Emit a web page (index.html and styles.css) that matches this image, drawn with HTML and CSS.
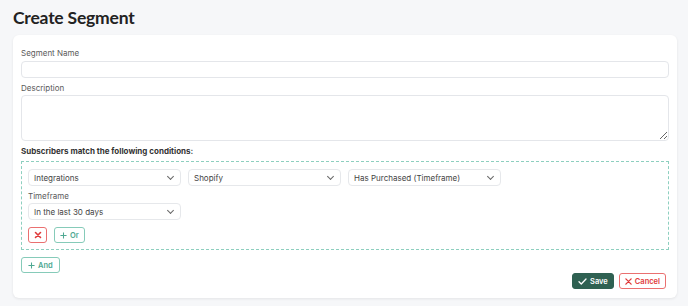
FILE: index.html
```html
<!DOCTYPE html>
<html>
<head>
  <meta charset="UTF-8">
  <link rel="stylesheet" href="styles.css">
</head>
<body>
  <h1 class="page-title">Create Segment</h1>

  <div class="segment-card">
    <div class="field">
      <label class="field-label">Segment Name</label>
      <input class="text-input" type="text">
    </div>
    <div class="field">
      <label class="field-label">Description</label>
      <textarea class="text-area"></textarea>
    </div>

    <div class="conditions-title">Subscribers match the following conditions:</div>

    <div class="condition-group">
      <div class="select-row">
        <div class="select-box">Integrations<span class="chevron"></span></div>
        <div class="select-box">Shopify<span class="chevron"></span></div>
        <div class="select-box">Has Purchased (Timeframe)<span class="chevron"></span></div>
      </div>
      <div class="sub-field">
        <label class="field-label">Timeframe</label>
        <div class="select-box">In the last 30 days<span class="chevron"></span></div>
      </div>
      <div class="group-actions">
        <button class="icon-button remove-button">
          <svg width="8" height="8" viewBox="0 0 8 8"><path d="M1.5 1.5L6.5 6.5M6.5 1.5L1.5 6.5" stroke="#e03a3a" stroke-width="1.6" stroke-linecap="round"/></svg>
        </button>
        <button class="outline-button">
          <svg width="7" height="7" viewBox="0 0 8 8"><path d="M4 0.5V7.5M0.5 4H7.5" stroke="#4ea892" stroke-width="1.2"/></svg>
          Or
        </button>
      </div>
    </div>

    <button class="outline-button and-button">
      <svg width="7" height="7" viewBox="0 0 8 8"><path d="M4 0.5V7.5M0.5 4H7.5" stroke="#4ea892" stroke-width="1.2"/></svg>
      And
    </button>

    <div class="form-actions">
      <button class="save-button">
        <svg width="9" height="7" viewBox="0 0 10 8"><path d="M1 4.2L3.6 6.8L9 1.2" fill="none" stroke="white" stroke-width="1.5" stroke-linecap="round" stroke-linejoin="round"/></svg>
        Save
      </button>
      <button class="cancel-button">
        <svg width="7" height="7" viewBox="0 0 8 8"><path d="M1 1L7 7M7 1L1 7" stroke="#e03a3a" stroke-width="1.5" stroke-linecap="round"/></svg>
        Cancel
      </button>
    </div>
  </div>
</body>
</html>
```

FILE: styles.css
```css
body {
  font-family: Inter, "Open Sans", sans-serif;
  margin: 0;
  padding: 7px 11px 8px 13px;
  background-color: #f6f7f9;
  color: #333;
}
.page-title {
  margin: 0;
  font-family: Lato, Inter, sans-serif;
  font-size: 17.5px;
  font-weight: 700;
  line-height: 22px;
  color: #222;
  letter-spacing: -0.2px;
}
.segment-card {
  margin-top: 6px;
  padding: 12px 8px 9px 8px;
  background-color: white;
  border-radius: 6px;
  box-shadow: 0 1px 3px rgba(0, 0, 0, 0.08);
}
.field {
  display: flex;
  flex-direction: column;
  margin-bottom: 4px;
}
.field-label {
  font-size: 8px;
  line-height: 12px;
  color: #5a5a5a;
  margin-bottom: 2px;
}
.text-input {
  height: 17px;
  box-sizing: border-box;
  border: 1px solid #e4e6ea;
  border-radius: 4px;
  padding: 0 6px;
}
.text-area {
  height: 46px;
  margin-top: -1px;
  box-sizing: border-box;
  border: 1px solid #e4e6ea;
  border-radius: 4px;
  resize: vertical;
  font-family: inherit;
}
.conditions-title {
  margin-top: 2px;
  font-size: 8px;
  line-height: 12px;
  font-weight: 700;
  color: #333;
  margin-bottom: 4px;
}
.condition-group {
  border: 1px dashed #8dcfbf;
  padding: 7px 6px 6px 6px;
}
.select-row {
  display: flex;
  gap: 7px;
}
.select-box {
  width: 153px;
  height: 17px;
  box-sizing: border-box;
  border: 1px solid #e6e8eb;
  border-radius: 4px;
  padding: 0 5px;
  font-size: 8px;
  color: #444;
  display: flex;
  align-items: center;
  justify-content: space-between;
}
.chevron {
  width: 4px;
  height: 4px;
  border-right: 1px solid #666;
  border-bottom: 1px solid #666;
  transform: rotate(45deg);
  margin: -3px 2px 0 0;
}
.sub-field {
  margin-top: 4px;
  display: flex;
  flex-direction: column;
}
.sub-field .field-label {
  margin-bottom: 1px;
}
.group-actions {
  display: flex;
  gap: 7px;
  margin-top: 7px;
}
button {
  font-family: inherit;
  cursor: pointer;
}
.icon-button {
  width: 19px;
  height: 16px;
  padding: 0;
  background: white;
  border-radius: 3px;
  display: inline-flex;
  align-items: center;
  justify-content: center;
}
.remove-button {
  border: 1px solid #ea7070;
}
.outline-button {
  height: 16px;
  padding: 0 5px;
  background: white;
  border: 1px solid #86cbb9;
  border-radius: 3px;
  color: #4ea892;
  font-size: 7.5px;
  font-weight: 600;
  display: inline-flex;
  align-items: center;
  gap: 3px;
}
.and-button {
  margin-top: 7px;
  padding: 0 6px;
}
.form-actions {
  display: flex;
  justify-content: flex-end;
  gap: 5px;
  margin-right: 3px;
}
.save-button {
  height: 16px;
  padding: 0 5px;
  background-color: #2f6152;
  color: white;
  border: 1px solid #2f6152;
  border-radius: 3px;
  font-size: 7.5px;
  font-weight: 600;
  display: inline-flex;
  align-items: center;
  gap: 3px;
}
.cancel-button {
  height: 16px;
  padding: 0 5px;
  background: white;
  color: #e03a3a;
  border: 1px solid #ea7070;
  border-radius: 3px;
  font-size: 7.5px;
  font-weight: 600;
  display: inline-flex;
  align-items: center;
  gap: 3px;
}
```
